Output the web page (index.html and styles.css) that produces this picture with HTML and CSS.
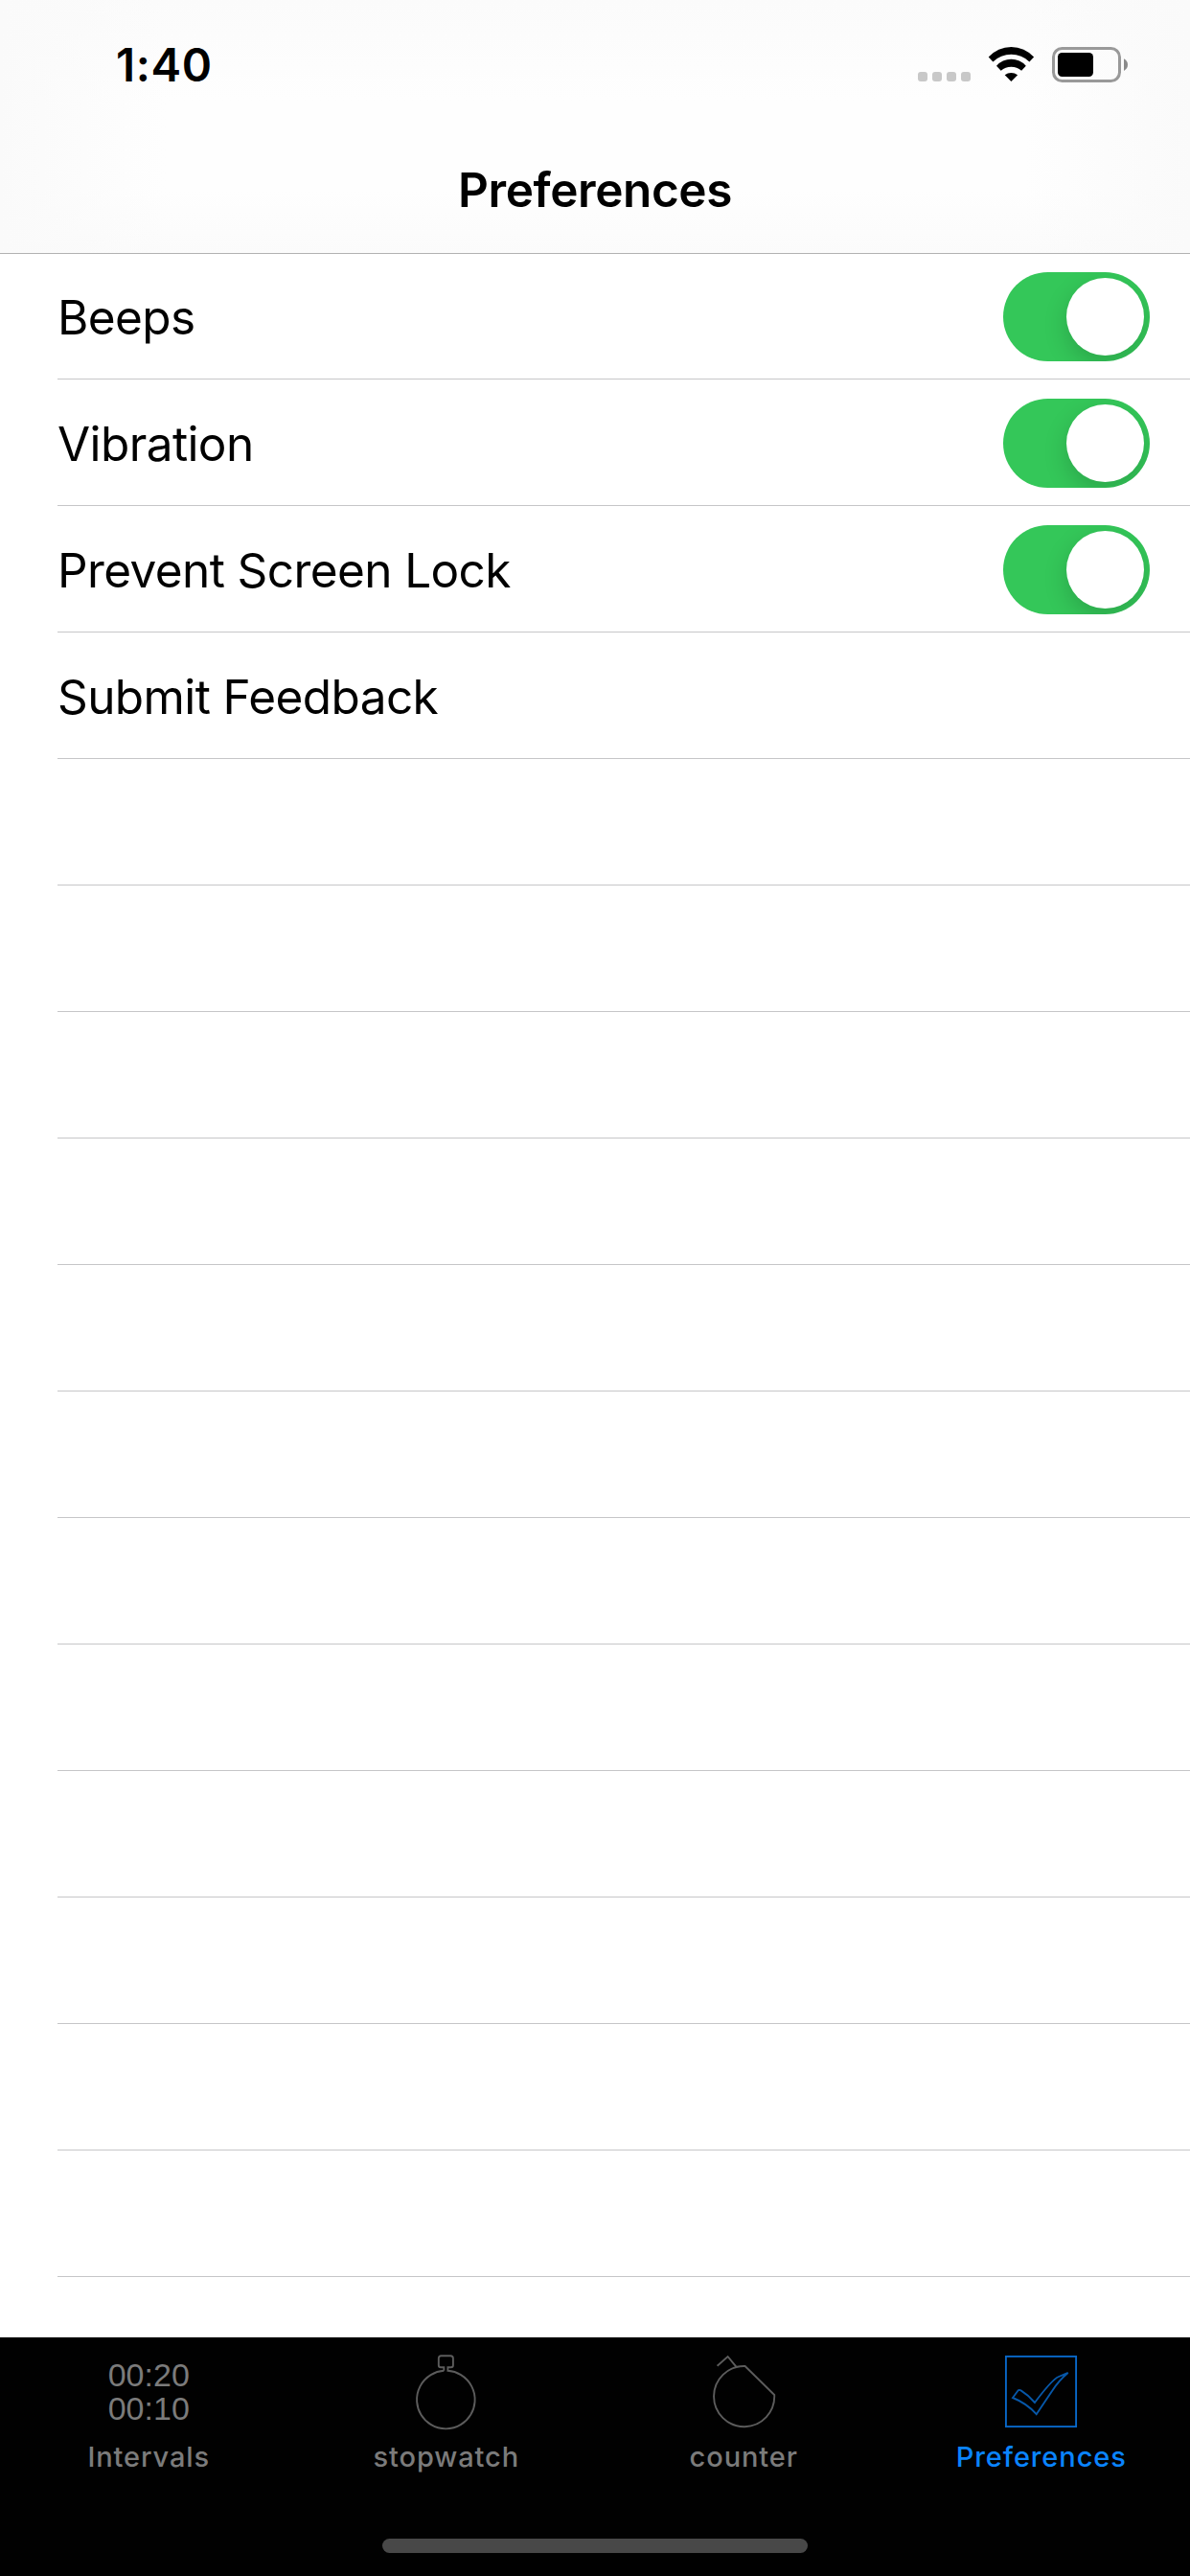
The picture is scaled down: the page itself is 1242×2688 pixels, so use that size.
FILE: index.html
```html
<!DOCTYPE html>
<html lang="en">
<head>
    <meta charset="UTF-8">
    <meta name="viewport" content="width=device-width, initial-scale=1.0">
    <title>Preferences</title>
    <link rel="stylesheet" href="styles.css">
</head>
<body>
    <div class="screen">
        <header class="header">
            <div class="status-bar">
                <span class="time">1:40</span>
                <div class="status-icons">
                    <svg class="signal" width="55" height="10" viewBox="0 0 55 10" fill="#c8c8c8">
                        <rect x="0" width="10" height="10" rx="3"/>
                        <rect x="15" width="10" height="10" rx="3"/>
                        <rect x="30" width="10" height="10" rx="3"/>
                        <rect x="45" width="10" height="10" rx="3"/>
                    </svg>
                    <svg class="wifi" width="49" height="38" viewBox="0 0 49 38">
                        <path d="M.7 11.5A31.8 31.8 0 0 1 48.1 11.5L43.4 16.4A27.5 27.5 0 0 0 5.4 16.4Z"/>
                        <path d="M9 20.7A20.4 20.4 0 0 1 39.8 20.7L35.1 25.7A16.6 16.6 0 0 0 13.7 25.7Z"/>
                        <path d="M17.7 30.3A11 11 0 0 1 31.1 30.3L24.4 37Z"/>
                    </svg>
                    <svg class="battery" width="79" height="37" viewBox="0 0 79 37">
                        <rect x="1.5" y="1.5" width="69" height="34" rx="9" fill="none" stroke="#999" stroke-width="3"/>
                        <rect x="6" y="6" width="37" height="25" rx="4.5"/>
                        <path d="M75 12.3Q79 14.5 79 18.6T75 24.9Z" fill="#8a8a8a"/>
                    </svg>
                </div>
            </div>
            <h1>Preferences</h1>
        </header>

        <ul class="settings">
            <li><span class="label">Beeps</span><span class="switch"></span></li>
            <li><span class="label">Vibration</span><span class="switch"></span></li>
            <li><span class="label">Prevent Screen Lock</span><span class="switch"></span></li>
            <li><span class="label">Submit Feedback</span></li>
            <li></li>
            <li></li>
            <li></li>
            <li></li>
            <li></li>
            <li></li>
            <li></li>
            <li></li>
            <li></li>
            <li></li>
            <li></li>
            <li></li>
        </ul>

        <footer class="tab-bar">
            <nav class="tabs">
                <a class="tab">
                    <span class="icon digits">00:20<br>00:10</span>
                    <span>Intervals</span>
                </a>
                <a class="tab">
                    <svg class="icon" viewBox="0 0 75 75">
                        <path d="M35.3 15.8V12.3H32Q29.8 12.3 29.8 10V3Q29.8 .3 32.4 .3H42.2Q44.9 .3 44.9 3V10Q44.9 12.3 42.6 12.3H39.4V15.8A30.3 30.3 0 1 1 35.3 15.8"/>
                    </svg>
                    <span>stopwatch</span>
                </a>
                <a class="tab">
                    <svg class="icon" viewBox="0 0 75 75">
                        <path d="M9.6 10.7L20.6 1L29.6 11.9M38.6 11L69.2 41A31.6 31.6 0 1 1 38.6 11Z"/>
                    </svg>
                    <span>counter</span>
                </a>
                <a class="tab active">
                    <svg class="icon" viewBox="0 0 75 75">
                        <rect x=".9" y=".9" width="73.2" height="73.2"/>
                        <path class="check" d="M8 44L13.5 36.5Q14.7 35.3 16.5 36.4Q24 41 31 49Q49 25 56 22L65.7 18Q56 26 49 37L32.7 61.2Q23 50 8 44Z"/>
                    </svg>
                    <span>Preferences</span>
                </a>
            </nav>
            <div class="home-indicator"></div>
        </footer>
    </div>
</body>
</html>
```

FILE: styles.css
```css
* {
    margin: 0;
    padding: 0;
    box-sizing: border-box;
}

body {
    background-color: #fff;
    color: #000;
    font-family: Inter, "Liberation Sans", sans-serif;
}

.screen {
    display: flex;
    flex-direction: column;
    width: 1242px;
    height: 2688px;
    overflow: hidden;
}

/* Header */
.header {
    height: 264px;
    flex-shrink: 0;
    background: linear-gradient(90deg, #fafafa, rgba(252, 252, 252, 0) 14%, rgba(252, 252, 252, 0) 86%, #fafafa),
        linear-gradient(#fbfbfb, #fefefe 40%, #fefefe 75%, #fbfbfb);
    box-shadow: 0 1px 0 #b2b2b2;
}

.status-bar {
    display: flex;
    justify-content: space-between;
    height: 132px;
    padding: 48px 65px 0 121px;
}

.time {
    font-size: 47.5px;
    font-weight: 600;
    line-height: 40px;
    letter-spacing: 0.6px;
}

.status-icons {
    display: flex;
    align-items: flex-start;
}

.signal {
    margin: 27px 18px 0 0;
}

.wifi {
    margin-right: 18px;
}

.battery {
    margin-top: 1px;
}

h1 {
    font-size: 49.5px;
    font-weight: 600;
    line-height: 132px;
    text-align: center;
    letter-spacing: -0.4px;
}

/* Settings list */
.settings {
    flex: 1;
    list-style: none;
    padding-left: 60px;
}

.settings li {
    display: flex;
    align-items: center;
    justify-content: space-between;
    height: 132px;
    padding: 2px 42px 0 0;
    border-bottom: 1px solid #c6c6c8;
}

.label {
    font-size: 49.5px;
    letter-spacing: -0.6px;
}

.switch {
    width: 153px;
    height: 93px;
    padding: 6px;
    border-radius: 47px;
    background-color: #34c759;
    overflow: hidden;
}

.switch::after {
    content: "";
    display: block;
    width: 81px;
    height: 81px;
    margin-left: auto;
    border-radius: 50%;
    background-color: #fff;
    box-shadow: 0 9px 24px rgba(0, 0, 0, 0.17);
}

/* Tab bar */
.tab-bar {
    display: flex;
    flex-direction: column;
    align-items: center;
    justify-content: space-between;
    height: 249px;
    flex-shrink: 0;
    padding: 19px 0 24px;
    background-color: #010101;
}

.tabs {
    display: flex;
    width: 100%;
}

.tab {
    flex: 1;
    display: flex;
    flex-direction: column;
    align-items: center;
    color: #7b7b7b;
    font-size: 29px;
    font-weight: 500;
    line-height: 36px;
    letter-spacing: 0.9px;
}

.icon {
    width: 75px;
    height: 75px;
    margin-bottom: 13px;
    overflow: visible;
    fill: none;
    stroke: #5c5c5c;
    stroke-width: 1.9;
}

.digits {
    width: auto;
    padding-top: 3px;
    font-family: "Liberation Sans", Arial, sans-serif;
    font-size: 34px;
    font-weight: 400;
    line-height: 35px;
    letter-spacing: 0;
    color: #7b7b7b;
    white-space: nowrap;
}

.active {
    color: #0a84ff;
}

.active .icon {
    stroke: #0968c9;
}

.active .check {
    stroke: #0757a8;
}

.home-indicator {
    width: 444px;
    height: 15px;
    border-radius: 8px;
    background-color: #484848;
}
```
